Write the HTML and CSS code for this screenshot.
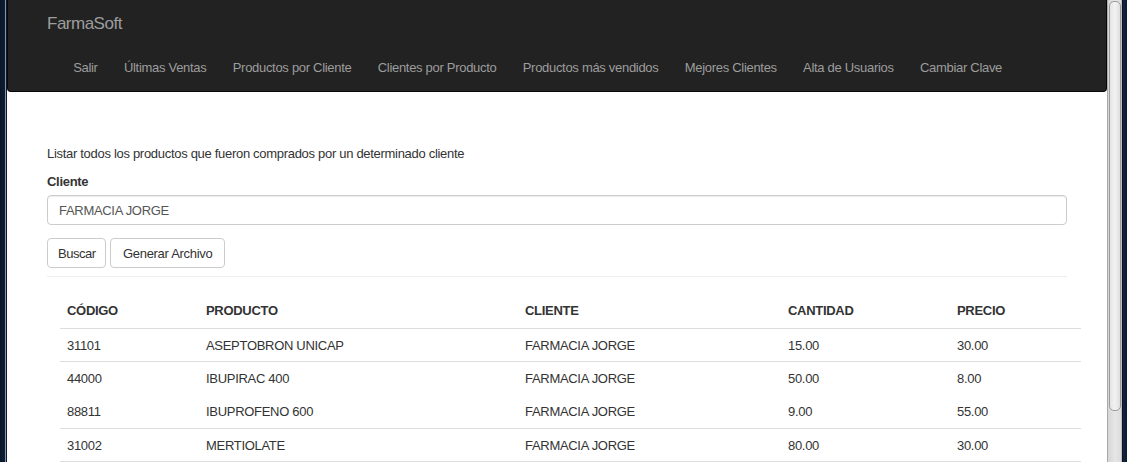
FILE: index.html
```html
<!DOCTYPE html>
<html lang="es">
<head>
<meta charset="utf-8">
<title>FarmaSoft - Productos por Cliente</title>
<link rel="stylesheet" href="styles.css">
</head>
<body>
<div class="window">
  <div class="frame-left"></div>
  <div class="page">
    <nav class="navbar">
      <div class="brand">FarmaSoft</div>
      <ul class="nav">
        <li><a href="#">Salir</a></li>
        <li><a href="#">Últimas Ventas</a></li>
        <li><a href="#">Productos por Cliente</a></li>
        <li><a href="#">Clientes por Producto</a></li>
        <li><a href="#">Productos más vendidos</a></li>
        <li><a href="#">Mejores Clientes</a></li>
        <li><a href="#">Alta de Usuarios</a></li>
        <li><a href="#">Cambiar Clave</a></li>
      </ul>
    </nav>
    <main class="container">
      <p class="desc">Listar todos los productos que fueron comprados por un determinado cliente</p>
      <label class="label" for="cliente">Cliente</label>
      <input class="input" id="cliente" type="text" value="FARMACIA JORGE">
      <div class="buttons">
        <button class="btn btn-narrow">Buscar</button>
        <button class="btn">Generar Archivo</button>
      </div>
      <hr class="sep">
      <table class="table">
        <colgroup>
          <col class="c1"><col class="c2"><col class="c3"><col class="c4"><col class="c5">
        </colgroup>
        <thead>
          <tr><th>CÓDIGO</th><th>PRODUCTO</th><th>CLIENTE</th><th>CANTIDAD</th><th>PRECIO</th></tr>
        </thead>
        <tbody>
          <tr><td>31101</td><td>ASEPTOBRON UNICAP</td><td>FARMACIA JORGE</td><td>15.00</td><td>30.00</td></tr>
          <tr><td>44000</td><td>IBUPIRAC 400</td><td>FARMACIA JORGE</td><td>50.00</td><td>8.00</td></tr>
          <tr class="no-line"><td>88811</td><td>IBUPROFENO 600</td><td>FARMACIA JORGE</td><td>9.00</td><td>55.00</td></tr>
          <tr><td>31002</td><td>MERTIOLATE</td><td>FARMACIA JORGE</td><td>80.00</td><td>30.00</td></tr>
        </tbody>
      </table>
    </main>
  </div>
  <div class="scrollbar"><div class="thumb"></div></div>
  <div class="frame-right"></div>
</div>
</body>
</html>
```
FILE: styles.css
```css
* { box-sizing: border-box; }
html, body { margin: 0; padding: 0; }
body {
  font-family: "Liberation Sans", Arial, sans-serif;
  font-size: 13px;
  letter-spacing: -0.3px;
  color: #333;
  background: #0c1a2d;
}
.window {
  display: flex;
  width: 1127px;
  height: 462px;
  overflow: hidden;
}
.frame-left {
  width: 7px;
  flex: none;
  background: linear-gradient(to right, #09162a 0, #0e1e34 5px, #6f8099 5px, #9aa8bb 6px, #0c1a2d 6px);
}
.page {
  width: 1100px;
  flex: none;
  background: #fff;
  overflow: hidden;
}
.navbar {
  background: #222;
  border: 1px solid #080808;
  border-top: none;
  border-radius: 0 0 4px 4px;
  height: 92px;
  padding-top: 14px;
}
.brand {
  margin-left: 39px;
  font-size: 17px;
  letter-spacing: -0.5px;
  line-height: 20px;
  color: #9d9d9d;
}
.nav {
  list-style: none;
  margin: 24px 0 0 52px;
  padding: 0;
  display: flex;
}
.nav a {
  display: block;
  padding: 0 13.15px;
  line-height: 20px;
  color: #9d9d9d;
  text-decoration: none;
}
.container {
  padding: 0 39px 0 40px;
}
.desc {
  margin: 53px 0 0;
  line-height: 18px;
}
.label {
  display: block;
  margin-top: 9px;
  font-weight: bold;
  line-height: 19px;
}
.input {
  display: block;
  margin-top: 4px;
  width: 1020px;
  height: 30px;
  padding: 0 11px;
  border: 1px solid #ccc;
  border-radius: 4px;
  font: inherit;
  letter-spacing: inherit;
  color: #555;
  box-shadow: inset 0 1px 1px rgba(0,0,0,.075);
}
.buttons {
  display: flex;
  gap: 4px;
  margin-top: 13px;
}
.btn {
  height: 30px;
  padding: 0 11.5px;
  background: #fff;
  border: 1px solid #ccc;
  border-radius: 4px;
  font: inherit;
  letter-spacing: inherit;
  color: #333;
}
.btn-narrow { padding: 0 10px; letter-spacing: -0.5px; }
.sep {
  margin: 8px 0 0;
  border: none;
  border-top: 1px solid #eee;
  width: 1020px;
}
.table {
  margin: 18px 0 0 13px;
  width: 1021px;
  border-collapse: collapse;
  table-layout: fixed;
}
.c1 { width: 139px; }
.c2 { width: 319px; }
.c3 { width: 263px; }
.c4 { width: 169px; }
.c5 { width: 131px; }
.table th {
  text-align: left;
  font-weight: bold;
  padding: 8px 7px;
  line-height: 16px;
  height: 33px;
  border-bottom: 1px solid #ddd;
}
.table td {
  padding: 9px 7px 7px;
  line-height: 16px;
  height: 33px;
  border-top: 1px solid #ddd;
}
.table tbody tr:first-child td { border-top: none; }
.table tr.no-line td { border-top-color: transparent; height: 34px; }
.table tbody tr:last-child td { border-bottom: 1px solid #ddd; }
.scrollbar {
  width: 15px;
  flex: none;
  background: linear-gradient(to right, #a9a9a9 0, #a9a9a9 1px, #d6d6d6 1px, #e6e6e6 8px, #dcdcdc 14px, #bdbdbd 14px);
  padding: 1px 1px 0 2px;
}
.thumb {
  height: 410px;
  border: 1px solid #9c9c9c;
  border-radius: 5px;
  background: linear-gradient(to right, #e4e4e4, #f2f2f2 50%, #dedede);
}
.frame-right {
  width: 5px;
  flex: none;
  background: linear-gradient(to right, #0a1424 0, #0a1424 1px, #13243e 1px, #0c1a2d 5px);
}
```
